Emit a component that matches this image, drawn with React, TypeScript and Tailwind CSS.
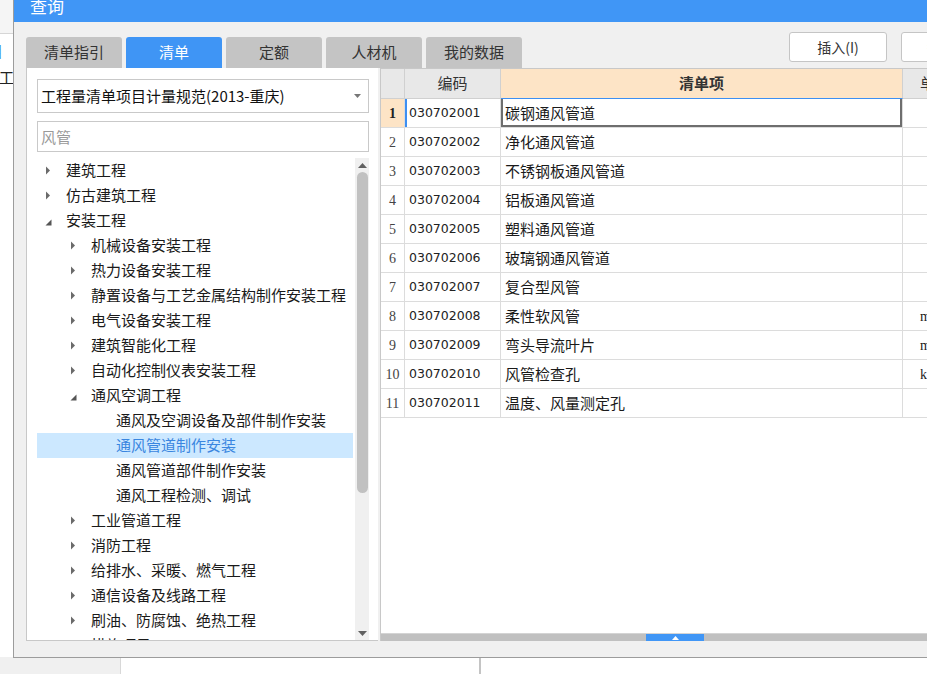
type TreeNode = { level: 0 | 1 | 2; label: string; state?: 'open' | 'closed'; selected?: boolean }

const nodes: TreeNode[] = [
  { level: 0, label: '建筑工程', state: 'closed' },
  { level: 0, label: '仿古建筑工程', state: 'closed' },
  { level: 0, label: '安装工程', state: 'open' },
  { level: 1, label: '机械设备安装工程', state: 'closed' },
  { level: 1, label: '热力设备安装工程', state: 'closed' },
  { level: 1, label: '静置设备与工艺金属结构制作安装工程', state: 'closed' },
  { level: 1, label: '电气设备安装工程', state: 'closed' },
  { level: 1, label: '建筑智能化工程', state: 'closed' },
  { level: 1, label: '自动化控制仪表安装工程', state: 'closed' },
  { level: 1, label: '通风空调工程', state: 'open' },
  { level: 2, label: '通风及空调设备及部件制作安装' },
  { level: 2, label: '通风管道制作安装', selected: true },
  { level: 2, label: '通风管道部件制作安装' },
  { level: 2, label: '通风工程检测、调试' },
  { level: 1, label: '工业管道工程', state: 'closed' },
  { level: 1, label: '消防工程', state: 'closed' },
  { level: 1, label: '给排水、采暖、燃气工程', state: 'closed' },
  { level: 1, label: '通信设备及线路工程', state: 'closed' },
  { level: 1, label: '刷油、防腐蚀、绝热工程', state: 'closed' },
  { level: 1, label: '措施项目', state: 'closed' },
]

const indent = ['pl-0', 'pl-[25px]', 'pl-[50px]']

const rows = [
  { code: '030702001', name: '碳钢通风管道', unit: '' },
  { code: '030702002', name: '净化通风管道', unit: '' },
  { code: '030702003', name: '不锈钢板通风管道', unit: '' },
  { code: '030702004', name: '铝板通风管道', unit: '' },
  { code: '030702005', name: '塑料通风管道', unit: '' },
  { code: '030702006', name: '玻璃钢通风管道', unit: '' },
  { code: '030702007', name: '复合型风管', unit: '' },
  { code: '030702008', name: '柔性软风管', unit: 'm' },
  { code: '030702009', name: '弯头导流叶片', unit: 'm2' },
  { code: '030702010', name: '风管检查孔', unit: 'kg' },
  { code: '030702011', name: '温度、风量测定孔', unit: '' },
]

const tabs = ['清单指引', '清单', '定额', '人材机', '我的数据']

function Arrow({ state }: { state?: 'open' | 'closed' }) {
  if (!state) return <div className="w-[29px] shrink-0" />
  return (
    <div className="w-[29px] shrink-0 flex items-center pl-[8px]">
      {state === 'closed' ? (
        <svg width="6" height="9" viewBox="0 0 6 9">
          <path d="M1 0.5 L5 4.5 L1 8.5 Z" fill="#6a6a6a" />
        </svg>
      ) : (
        <svg width="7" height="7" viewBox="0 0 7 7" className="mt-[3px]">
          <path d="M6.5 0.5 L6.5 6.5 L0.5 6.5 Z" fill="#555" />
        </svg>
      )}
    </div>
  )
}

export default function App() {
  return (
    <div className="relative w-[927px] h-[674px] overflow-hidden bg-white font-['Noto_Sans_CJK_SC',sans-serif]">
      {/* app behind the dialog */}
      <div className="flex flex-col h-full">
        <div className="h-[34px] shrink-0 bg-[#f5f5f5] border-b border-[#d6d6d6]" />
        <div className="flex flex-1 min-h-0">
          <div className="w-[121px] shrink-0 flex flex-col bg-[#f0f0f0] border-r border-[#d8d8d8]">
            <div className="h-[623px] bg-white pt-[4px] text-[15px] leading-[26px] whitespace-nowrap">
              <div className="-ml-[12px] text-[#3b8ee8]">目</div>
              <div className="-ml-[1px] text-[#222]">工程</div>
            </div>
          </div>
          <div className="w-[360px] shrink-0 border-r-2 border-[#c4c4c4]" />
          <div className="flex-1" />
        </div>
      </div>

      {/* 查询 dialog */}
      <div className="absolute left-[13px] top-[-10px] w-[960px] h-[668px] flex flex-col bg-[#f0f0f0] border-l border-b border-[#9c9c9c]">
        <div className="h-[32px] shrink-0 bg-[#4096f6] pl-[16px] flex items-center text-white text-[17px]">查询</div>

        <div className="flex-1 min-h-0 flex flex-col pl-[12px] pb-[16px]">
          {/* tabs + buttons */}
          <div className="h-[46px] shrink-0 flex">
            <div className="flex items-end gap-[4px]">
              {tabs.map((t) => (
                <div
                  key={t}
                  className={`w-[96px] h-[31px] rounded-t-[3px] flex items-center justify-center text-[15px] ${
                    t === '清单' ? 'bg-[#3f95f5] text-white' : 'bg-[#c4c4c4] text-[#333]'
                  }`}
                >
                  {t}
                </div>
              ))}
            </div>
            <div className="flex gap-[14px] ml-[267px] pt-[10px]">
              <button className="w-[98px] h-[30px] bg-white border border-[#c5c5c5] rounded-[3px] text-[14px] text-[#333]">插入(I)</button>
              <button className="w-[98px] h-[30px] bg-white border border-[#c5c5c5] rounded-[3px] text-[14px] text-[#333]">替换(R)</button>
            </div>
          </div>

          {/* main area */}
          <div className="flex-1 min-h-0 flex gap-[2px]">
            {/* left panel */}
            <div className="w-[352px] shrink-0 flex flex-col bg-white border-l border-b border-[#c8c8c8] pl-[10px] pr-[9px] pt-[11px]">
              <div className="h-[34px] shrink-0 border border-[#c9c9c9] flex items-center pl-[3px] pr-[7px] text-[15px] text-[#111]">
                <span className="flex-1 whitespace-nowrap">工程量清单项目计量规范(2013-重庆)</span>
                <svg width="7" height="4" viewBox="0 0 7 4">
                  <path d="M0 0 L7 0 L3.5 4 Z" fill="#777" />
                </svg>
              </div>
              <input
                className="mt-[8px] h-[31px] shrink-0 border border-[#c9c9c9] px-[3px] text-[15px] outline-none placeholder:text-[#9a9a9a]"
                placeholder="风管"
              />
              <div className="mt-[6px] flex-1 min-h-0 flex gap-[2px]">
                <div className="w-[316px] overflow-hidden flex flex-col">
                  {nodes.map((n) => (
                    <div
                      key={n.label}
                      className={`h-[25px] shrink-0 flex items-center whitespace-nowrap text-[15px] ${indent[n.level]} ${
                        n.selected ? 'bg-[#cce8ff] text-[#3a86e0]' : 'text-[#1a1a1a]'
                      }`}
                    >
                      <Arrow state={n.state} />
                      <span>{n.label}</span>
                    </div>
                  ))}
                </div>
                {/* vertical scrollbar */}
                <div className="w-[14px] shrink-0 flex flex-col items-center bg-[#f0f0f0]">
                  <div className="h-[14px] shrink-0 flex items-center justify-center">
                    <svg width="9" height="5" viewBox="0 0 9 5">
                      <path d="M0 5 L4.5 0 L9 5 Z" fill="#606060" />
                    </svg>
                  </div>
                  <div className="w-[11px] h-[321px] shrink-0 rounded-full bg-[#c1c1c1]" />
                  <div className="flex-1" />
                  <div className="h-[14px] shrink-0 flex items-center justify-center">
                    <svg width="9" height="5" viewBox="0 0 9 5">
                      <path d="M0 0 L9 0 L4.5 5 Z" fill="#606060" />
                    </svg>
                  </div>
                </div>
              </div>
            </div>

            {/* grid */}
            <div className="flex-1 min-w-0 flex flex-col bg-white border-l border-t border-[#c8c8c8]">
              <div className="h-[30px] shrink-0 flex text-[15px] text-[#333]">
                <div className="w-[24px] shrink-0 bg-[#e8e8e8] border-r border-b border-[#d0d0d0]" />
                <div className="w-[96px] shrink-0 bg-[#e8e8e8] border-r border-b border-[#d0d0d0] flex items-center justify-center">编码</div>
                <div className="w-[402px] shrink-0 bg-[#fde4c6] border-r border-[#d0d0d0] border-b border-b-[#3d8ff2] flex items-center justify-center font-bold">清单项</div>
                <div className="flex-1 bg-[#e8e8e8] border-b border-[#d0d0d0] flex items-center pl-[17px]">单位</div>
              </div>

              {rows.map((r, i) => {
                const first = i === 0
                return (
                  <div key={r.code} className="h-[29px] shrink-0 flex border-b border-[#dcdcdc]">
                    <div
                      className={`w-[24px] shrink-0 border-r border-[#dcdcdc] flex items-center justify-center font-['Liberation_Serif',serif] text-[14px] ${
                        first ? 'bg-[#fde4c6] font-bold text-[#222]' : 'text-[#444]'
                      }`}
                    >
                      {i + 1}
                    </div>
                    <div
                      className={`w-[96px] shrink-0 border-r border-[#dcdcdc] flex items-center pl-[4px] font-['DejaVu_Sans',sans-serif] text-[12.5px] text-[#222] ${
                        first ? 'shadow-[inset_2px_0_0_#3d8ff2]' : ''
                      }`}
                    >
                      {r.code}
                    </div>
                    <div
                      className={`w-[402px] shrink-0 border-r border-[#dcdcdc] flex items-center pl-[4px] text-[15px] text-[#1a1a1a] ${
                        first ? 'shadow-[inset_2px_0_0_#6e6e6e,inset_-2px_-2px_0_#6e6e6e]' : ''
                      }`}
                    >
                      {r.name}
                    </div>
                    <div className="flex-1 flex items-center pl-[17px] font-['Liberation_Serif',serif] text-[14px] text-[#222]">{r.unit}</div>
                  </div>
                )
              })}
              <div className="flex-1" />

              {/* splitter */}
              <div className="h-[8px] shrink-0 bg-[#c0c0c0] border-t border-[#d4d4d4] flex pl-[265px]">
                <div className="w-[58px] h-full bg-[#4096f6] flex items-center justify-center">
                  <svg width="7" height="4" viewBox="0 0 7 4">
                    <path d="M0 4 L3.5 0 L7 4 Z" fill="#fff" />
                  </svg>
                </div>
              </div>
            </div>
          </div>
        </div>
      </div>
    </div>
  )
}
